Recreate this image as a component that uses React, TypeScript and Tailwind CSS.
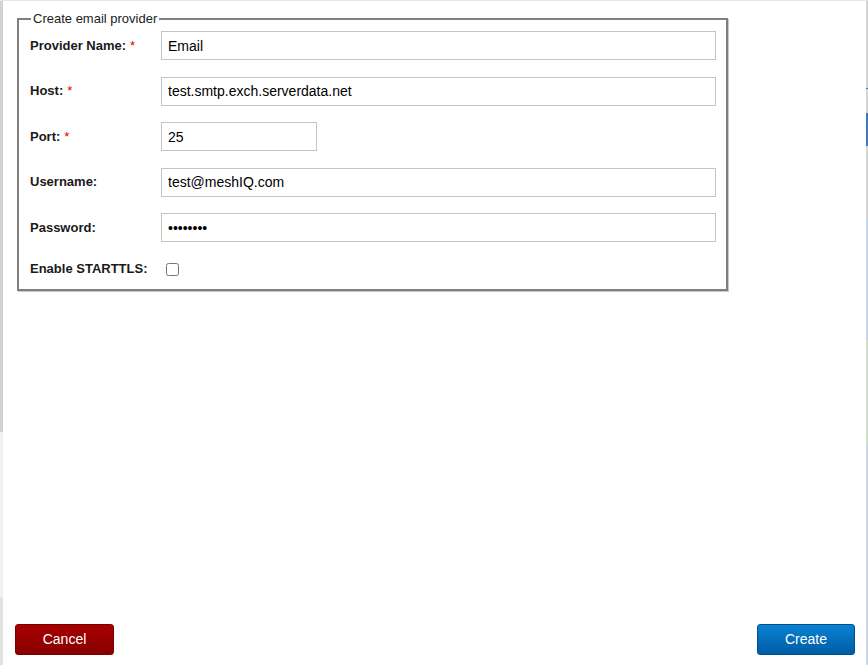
import React from 'react'

const font = { fontFamily: '"Liberation Sans", Arial, sans-serif' }

function Field({ label, required, children }: { label: string, required?: boolean, children: React.ReactNode }) {
  return (
    <div className="flex items-center">
      <label className="w-[131px] shrink-0 text-[13px] font-bold text-[#1a1a1a]">
        {label}
        {required && <span className="ml-1 font-normal text-[#e00000]">*</span>}
      </label>
      {children}
    </div>
  )
}

const inputCls = 'h-[29px] border border-[#c4c4c4] bg-white pl-[6px] text-[14px] text-black outline-none'

export default function App() {
  return (
    <div className="flex h-[665px] w-[868px] flex-col bg-white" style={font}>
      <div className="h-px w-full shrink-0 bg-[#e6e6e6]" />
      <div className="flex min-h-0 flex-1">
        {/* page behind, left edge */}
        <div className="flex w-[3px] shrink-0 flex-col">
          <div className="h-[431px] bg-[#d2d2d2]" />
          <div className="h-[166px] bg-[#f0f0f0]" />
          <div className="flex-1 bg-[#e2e2e2]" />
        </div>

        <div className="flex min-w-0 flex-1 flex-col">
          <fieldset className="ml-[14px] mt-[10px] w-[711px] border-2 border-[#7f7f7f] pb-[9px] pl-[11px] pr-[10px] pt-[5px] shadow-[1px_1px_0_#c8c8c8]">
            <legend className="ml-[1px] px-[2px] text-[13px] leading-[15px] text-[#222]">Create email provider</legend>
            <div className="flex flex-col gap-[16.5px]">
              <Field label="Provider Name:" required>
                <input className={`${inputCls} w-[555px]`} defaultValue="Email" readOnly />
              </Field>
              <Field label="Host:" required>
                <input className={`${inputCls} w-[555px]`} defaultValue="test.smtp.exch.serverdata.net" readOnly />
              </Field>
              <Field label="Port:" required>
                <input className={`${inputCls} w-[156px]`} defaultValue="25" readOnly />
              </Field>
              <Field label="Username:">
                <input className={`${inputCls} w-[555px]`} defaultValue="test@meshIQ.com" readOnly />
              </Field>
              <Field label="Password:">
                <input type="password" className={`${inputCls} w-[555px]`} defaultValue="password" readOnly />
              </Field>
              <div className="-mt-[0.5px] flex h-[22px] items-center">
                <label className="w-[131px] shrink-0 text-[13px] font-bold text-[#1a1a1a]">Enable STARTTLS:</label>
                <input type="checkbox" className="ml-[5px] h-[13px] w-[13px]" />
              </div>
            </div>
          </fieldset>

          <div className="flex-1" />

          <div className="mb-[10px] flex items-center justify-between pl-[12px] pr-[11px]">
            <button className="h-[31px] w-[99px] rounded-[3px] border border-[#7a0000] bg-gradient-to-b from-[#a80000] to-[#870000] text-[14px] text-white">
              Cancel
            </button>
            <button className="h-[31px] w-[98px] rounded-[3px] border border-[#00508f] bg-gradient-to-b from-[#0b82d2] to-[#005da5] text-[14px] text-white">
              Create
            </button>
          </div>
        </div>

        {/* page behind, right edge */}
        <div className="flex w-[2px] shrink-0 flex-col">
          <div className="h-[87px] bg-[#d4d4d4]" />
          <div className="h-px bg-[#3d7ab8]" />
          <div className="h-[24px] bg-[#d4d4d4]" />
          <div className="h-[33px] bg-[#3d7ab8]" />
          <div className="h-[74px] bg-[#d4d4d4]" />
          <div className="h-[120px] bg-[#c6d6ea]" />
          <div className="h-[105px] bg-[#cfe0cf]" />
          <div className="flex-1 bg-[#ccd6e4]" />
        </div>
      </div>
    </div>
  )
}
